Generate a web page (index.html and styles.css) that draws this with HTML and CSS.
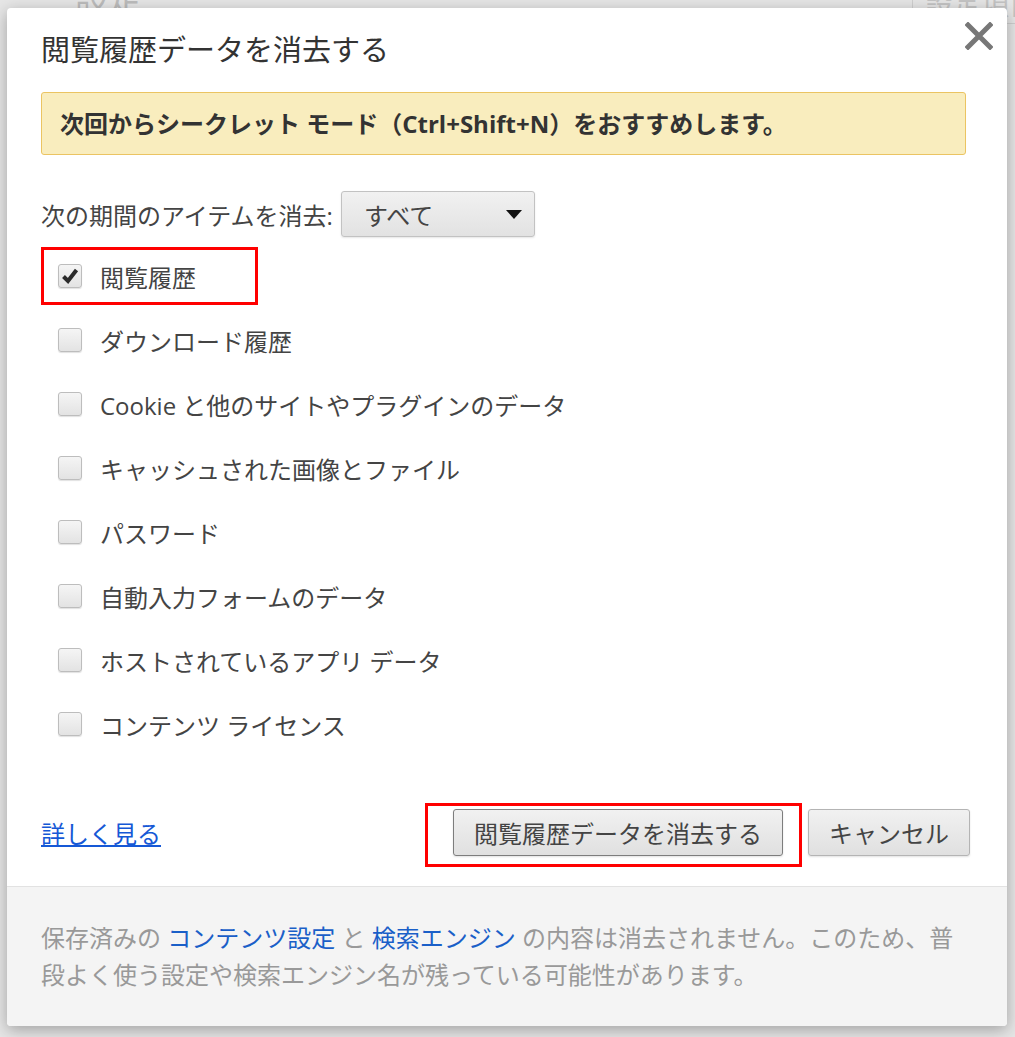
FILE: index.html
```html
<!DOCTYPE html>
<html lang="ja">
<head>
  <meta charset="UTF-8" />
  <title>設定 - 閲覧履歴データを消去する</title>
  <link rel="stylesheet" href="styles.css">
</head>
<body>
  <div class="page">
    <div class="page-head">
      <h1 class="page-title">設定</h1>
      <div class="page-search">設定項目を検索</div>
    </div>
  </div>

  <div class="dialog">
    <div class="dialog-body">
      <div class="dialog-head">
        <h2 class="dialog-title">閲覧履歴データを消去する</h2>
        <button class="close" title="閉じる">
          <svg width="28" height="28" viewBox="0 0 28 28">
            <path d="M3 3L25 25M25 3L3 25" stroke="currentColor" stroke-width="5" stroke-linecap="square"/>
          </svg>
        </button>
      </div>

      <div class="notice">次回からシークレット モード（Ctrl+Shift+N）をおすすめします。</div>

      <div class="period">
        <span>次の期間のアイテムを消去:</span>
        <div class="select">
          <span>すべて</span>
          <svg width="16" height="9" viewBox="0 0 16 9"><path d="M0 0H16L8 9Z" fill="#111"/></svg>
        </div>
      </div>

      <ul class="options">
        <li class="option marked">
          <span class="check">
            <svg width="18" height="18" viewBox="0 0 18 18"><path d="M2.5 9.5L7 14L15.5 3" fill="none" stroke="#2b2b2b" stroke-width="4"/></svg>
          </span>
          閲覧履歴
        </li>
        <li class="option"><span class="check"></span>ダウンロード履歴</li>
        <li class="option"><span class="check"></span>Cookie と他のサイトやプラグインのデータ</li>
        <li class="option"><span class="check"></span>キャッシュされた画像とファイル</li>
        <li class="option"><span class="check"></span>パスワード</li>
        <li class="option"><span class="check"></span>自動入力フォームのデータ</li>
        <li class="option"><span class="check"></span>ホストされているアプリ データ</li>
        <li class="option"><span class="check"></span>コンテンツ ライセンス</li>
      </ul>

      <div class="actions">
        <a class="more" href="#">詳しく見る</a>
        <div class="buttons">
          <span class="marked-btn"><button class="btn btn-main">閲覧履歴データを消去する</button></span>
          <button class="btn">キャンセル</button>
        </div>
      </div>
    </div>

    <div class="dialog-foot">
      <p>保存済みの <a href="#">コンテンツ設定</a> と <a href="#">検索エンジン</a> の内容は消去されません。このため、普段よく使う設定や検索エンジン名が残っている可能性があります。</p>
    </div>
  </div>
</body>
</html>
```

FILE: styles.css
```css
* {
  box-sizing: border-box;
}

body {
  margin: 0;
  height: 1037px;
  overflow: hidden;
  position: relative;
  background: #e6e6e6;
  font-family: "Open Sans", "Noto Sans CJK JP", sans-serif;
  color: #333;
}

/* page behind the modal */
.page-head {
  display: flex;
  justify-content: space-between;
  align-items: flex-start;
}

.page-title {
  margin: -22px 0 0 75px;
  font-size: 34px;
  font-weight: normal;
  line-height: 40px;
  color: #bcbcbc;
}

.page-search {
  margin-top: -16px;
  width: 103px;
  height: 40px;
  padding-left: 12px;
  border: 1px solid #cfcfcf;
  border-right: none;
  font-size: 28px;
  line-height: 38px;
  color: #c4c4c4;
  white-space: nowrap;
  overflow: hidden;
}

/* modal */
.dialog {
  position: absolute;
  left: 7px;
  top: 8px;
  width: 1000px;
  background: #fff;
  border-radius: 4px;
  box-shadow: 0 4px 16px rgba(0,0,0,0.3);
  overflow: hidden;
}

.dialog-body {
  padding: 24px 41px 19px 34px;
}

.dialog-head {
  display: flex;
  justify-content: space-between;
  align-items: flex-start;
}

.dialog-title {
  margin: 0;
  font-size: 29px;
  font-weight: normal;
  line-height: 36px;
  color: #333;
}

.close {
  margin: -10px -27px 0 0;
  padding: 0;
  border: none;
  background: none;
  color: #777;
  width: 28px;
  height: 28px;
  cursor: pointer;
}

.close svg {
  display: block;
}

.notice {
  margin-top: 24px;
  height: 63px;
  padding: 0 18px;
  background: #f9edbe;
  border: 1px solid #ebc462;
  border-radius: 3px;
  font-size: 24px;
  font-weight: bold;
  line-height: 61px;
  color: #333;
  white-space: nowrap;
}

.period {
  margin-top: 36px;
  display: flex;
  align-items: center;
  gap: 8px;
  font-size: 24px;
  color: #444;
}

.select {
  width: 194px;
  height: 46px;
  display: flex;
  align-items: center;
  justify-content: space-between;
  padding: 0 12px 0 22px;
  border: 1px solid #c2c2c2;
  border-radius: 3px;
  background: linear-gradient(#f1f1f1, #e2e2e2);
  box-shadow: 0 1px 2px rgba(0,0,0,0.1);
  color: #444;
}

.options {
  list-style: none;
  margin: 10px 0 0;
  padding: 0;
}

.option {
  height: 64px;
  display: flex;
  align-items: center;
  gap: 18px;
  padding-left: 17px;
  font-size: 24px;
  color: #444;
}

.option.marked {
  width: 217px;
  height: 58px;
  margin: 3px 0;
  padding-left: 14px;
  border: 3px solid #f00;
}

.check {
  width: 24px;
  height: 24px;
  flex-shrink: 0;
  display: flex;
  align-items: center;
  justify-content: center;
  border: 1px solid #bdbdbd;
  border-radius: 3px;
  background: linear-gradient(#f5f5f5, #e3e3e3);
  box-shadow: 0 1px 1px rgba(0,0,0,0.12);
}

.actions {
  margin: 47px -4px 0 0;
  height: 64px;
  display: flex;
  align-items: center;
  justify-content: space-between;
}

.more {
  margin-bottom: 6px;
  font-size: 24px;
  color: #1558d6;
  text-decoration: underline;
}

.buttons {
  display: flex;
  align-items: flex-start;
}

.marked-btn {
  display: block;
  padding: 3px 16px 8px 25px;
  border: 3px solid #f00;
  margin-right: 6px;
}

.btn {
  display: block;
  height: 47px;
  padding: 0 20px;
  border: 1px solid #b4b4b4;
  border-radius: 3px;
  background: linear-gradient(#f1f1f1, #e0e0e0);
  box-shadow: 0 1px 2px rgba(0,0,0,0.12);
  font-family: inherit;
  font-size: 24px;
  color: #444;
  cursor: pointer;
}

.buttons > .btn {
  margin-top: 6px;
}

.btn-main {
  border-color: #7d7d7d;
}

.dialog-foot {
  border-top: 1px solid #e2e2e2;
  background: #f4f4f4;
  padding: 32px 41px 33px 34px;
}

.dialog-foot p {
  margin: 0;
  font-size: 24px;
  line-height: 37px;
  color: #999;
}

.dialog-foot a {
  color: #1a5fc8;
  text-decoration: none;
}
```
